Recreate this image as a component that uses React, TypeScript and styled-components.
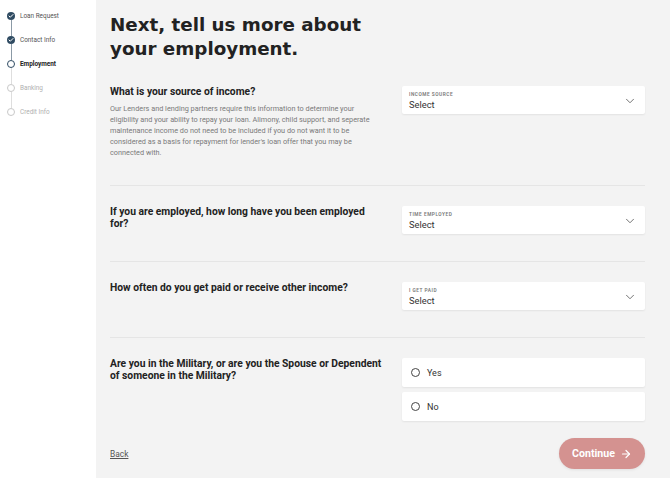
import React, { useState } from "react";
import styled, { createGlobalStyle } from "styled-components";
import { ArrowRight, Check, ChevronDown } from "lucide-react";

const GlobalStyle = createGlobalStyle`
    html, body {
        margin: 0;
        padding: 0;
        background: #f3f3f3;
    }
    * {
        box-sizing: border-box;
    }
    body {
        font-family: Roboto, "Liberation Sans", sans-serif;
        color: #222;
    }
`;

const Page = styled.div`
    display: flex;
    min-height: 100vh;
`;

const Sidebar = styled.aside`
    width: 96px;
    flex-shrink: 0;
    background: #fff;
    padding: 12px 0 0 7px;
`;

const StepList = styled.div`
    display: flex;
    flex-direction: column;
`;

const StepRow = styled.div`
    display: flex;
    align-items: center;
    gap: 5px;
    height: 8px;
`;

const Dot = styled.span<{ $state: string }>`
    width: 8px;
    height: 8px;
    border-radius: 50%;
    flex-shrink: 0;
    display: flex;
    align-items: center;
    justify-content: center;
    background: ${(p) => (p.$state === "done" ? "#2f4b62" : "#fff")};
    border: ${(p) =>
        p.$state === "done"
            ? "none"
            : p.$state === "current"
            ? "1.4px solid #2f4b62"
            : "1px solid #c8c8c8"};
    color: #fff;
`;

const StepLabel = styled.span<{ $state: string }>`
    font-size: 6.4px;
    white-space: nowrap;
    font-weight: ${(p) => (p.$state === "current" ? 700 : 400)};
    color: ${(p) =>
        p.$state === "current" ? "#222" : p.$state === "done" ? "#555" : "#b0b0b0"};
`;

const Connector = styled.span<{ $done: boolean }>`
    width: 1px;
    height: 16px;
    margin-left: 3.5px;
    background: ${(p) => (p.$done ? "#8b9aa6" : "#dedede")};
`;

const Main = styled.main`
    flex: 1;
    padding: 13px 25px 0 14px;
`;

const Heading = styled.h1`
    margin: 0 0 5px;
    font-family: "DejaVu Sans", Verdana, sans-serif;
    font-size: 18.3px;
    line-height: 24px;
    font-weight: 700;
    color: #222;
`;

const QuestionRow = styled.section<{ $last?: boolean }>`
    display: grid;
    grid-template-columns: 274px 1fr;
    column-gap: 18px;
    align-items: start;
    padding: 20px 0 ${(p) => (p.$last ? "0" : "27px")};
    border-bottom: ${(p) => (p.$last ? "none" : "1px solid #e5e5e5")};
`;

const QuestionTitle = styled.h2`
    margin: 0;
    font-size: 10.3px;
    line-height: 12px;
    font-weight: 700;
    color: #222;
`;

const Description = styled.p`
    margin: 5px 0 0;
    max-width: 270px;
    font-size: 7.3px;
    line-height: 11px;
    color: #7a7a7a;
`;

const SelectBox = styled.div`
    height: 28px;
    background: #fff;
    border-radius: 2px;
    box-shadow: 0 1px 2px rgba(0, 0, 0, 0.07);
    display: flex;
    align-items: center;
    justify-content: space-between;
    padding: 1px 8px 0 7px;
    cursor: pointer;
`;

const SelectText = styled.div`
    display: flex;
    flex-direction: column;
    gap: 1px;
`;

const SelectLabel = styled.span`
    font-size: 4.8px;
    line-height: 7px;
    letter-spacing: 0.5px;
    font-weight: 600;
    color: #777;
    text-transform: uppercase;
`;

const SelectValue = styled.span`
    font-size: 9.3px;
    line-height: 11px;
    color: #333;
`;

const Options = styled.div`
    display: flex;
    flex-direction: column;
    gap: 5px;
`;

const Option = styled.label`
    height: 29px;
    background: #fff;
    border-radius: 2px;
    box-shadow: 0 1px 2px rgba(0, 0, 0, 0.07);
    display: flex;
    align-items: center;
    gap: 7px;
    padding-left: 9px;
    font-size: 9px;
    color: #333;
    cursor: pointer;
`;

const Radio = styled.span<{ $checked: boolean }>`
    width: 9px;
    height: 9px;
    border-radius: 50%;
    border: 1px solid #444;
    background: ${(p) => (p.$checked ? "#2f4b62" : "#fff")};
`;

const Footer = styled.footer`
    display: flex;
    justify-content: space-between;
    align-items: center;
    margin-top: 17px;
`;

const BackLink = styled.a`
    font-size: 8.4px;
    color: #555;
    text-decoration: underline;
    cursor: pointer;
`;

const ContinueButton = styled.button`
    width: 86px;
    height: 31px;
    border: none;
    border-radius: 16px;
    background: #d49290;
    color: #fff;
    font-family: Roboto, "Liberation Sans", sans-serif;
    font-size: 10.6px;
    font-weight: 700;
    display: flex;
    align-items: center;
    justify-content: center;
    gap: 5px;
    box-shadow: 0 1px 3px rgba(0, 0, 0, 0.08);
    cursor: pointer;
`;

const steps = [
    { label: "Loan Request", state: "done" },
    { label: "Contact Info", state: "done" },
    { label: "Employment", state: "current" },
    { label: "Banking", state: "todo" },
    { label: "Credit Info", state: "todo" },
];

function Select({ label }: { label: string }) {
    return (
        <SelectBox>
            <SelectText>
                <SelectLabel>{label}</SelectLabel>
                <SelectValue>Select</SelectValue>
            </SelectText>
            <ChevronDown size={14} strokeWidth={1.4} color="#555" />
        </SelectBox>
    );
}

export default function App() {
    const [military, setMilitary] = useState("");
    return (
        <Page>
            <GlobalStyle />
            <Sidebar>
                <StepList>
                    {steps.map((step, i) => (
                        <React.Fragment key={step.label}>
                            {i > 0 && <Connector $done={i < 3} />}
                            <StepRow>
                                <Dot $state={step.state}>
                                    {step.state === "done" && <Check size={6} strokeWidth={4} />}
                                </Dot>
                                <StepLabel $state={step.state}>{step.label}</StepLabel>
                            </StepRow>
                        </React.Fragment>
                    ))}
                </StepList>
            </Sidebar>
            <Main>
                <Heading>
                    Next, tell us more about
                    <br />
                    your employment.
                </Heading>

                <QuestionRow>
                    <div>
                        <QuestionTitle>What is your source of income?</QuestionTitle>
                        <Description>
                            Our Lenders and lending partners require this information to determine your
                            eligibility and your ability to repay your loan. Alimony, child support, and seperate
                            maintenance income do not need to be included if you do not want it to be
                            considered as a basis for repayment for lender's loan offer that you may be
                            connected with.
                        </Description>
                    </div>
                    <Select label="Income Source" />
                </QuestionRow>

                <QuestionRow>
                    <QuestionTitle>If you are employed, how long have you been employed for?</QuestionTitle>
                    <Select label="Time Employed" />
                </QuestionRow>

                <QuestionRow>
                    <QuestionTitle>How often do you get paid or receive other income?</QuestionTitle>
                    <Select label="I Get Paid" />
                </QuestionRow>

                <QuestionRow $last>
                    <QuestionTitle>
                        Are you in the Military, or are you the Spouse or Dependent of someone in the Military?
                    </QuestionTitle>
                    <Options>
                        {["Yes", "No"].map((opt) => (
                            <Option key={opt} onClick={() => setMilitary(opt)}>
                                <Radio $checked={military === opt} />
                                {opt}
                            </Option>
                        ))}
                    </Options>
                </QuestionRow>

                <Footer>
                    <BackLink>Back</BackLink>
                    <ContinueButton>
                        Continue
                        <ArrowRight size={12} strokeWidth={2.4} />
                    </ContinueButton>
                </Footer>
            </Main>
        </Page>
    );
}
